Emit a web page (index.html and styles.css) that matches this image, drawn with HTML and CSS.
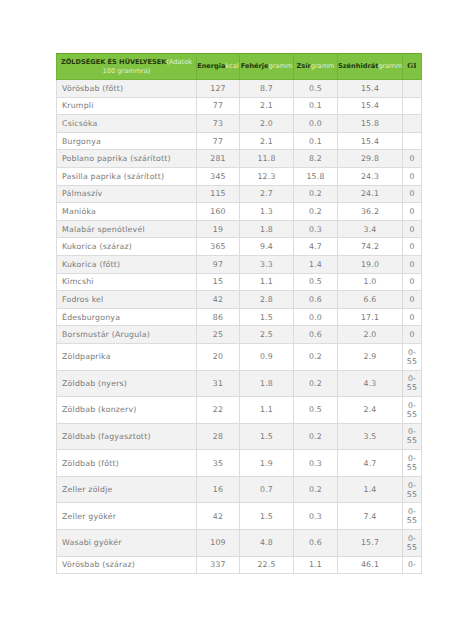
FILE: index.html
```html
<!DOCTYPE html>
<html lang="hu">
<head>
    <meta charset="UTF-8">
    <title>Zöldségek és hüvelyesek</title>
    <link rel="stylesheet" href="styles.css">
</head>
<body>
    <div class="page">
        <table class="nutri">
            <thead>
                <tr>
                    <th class="name-col"><b>ZÖLDSÉGEK ÉS HÜVELYESEK</b><span class="unit">(Adatok<br>100 grammra)</span></th>
                    <th class="c-en"><b>Energia</b><span class="unit">kcal</span></th>
                    <th class="c-fe"><b>Fehérje</b><span class="unit">gramm</span></th>
                    <th class="c-zs"><b>Zsír</b><span class="unit">gramm</span></th>
                    <th class="c-sz"><b>Szénhidrát</b><span class="unit">gramm</span></th>
                    <th class="c-gi"><b class="gi">GI</b></th>
                </tr>
            </thead>
            <tbody>
                <tr><td>Vörösbab (főtt)</td><td>127</td><td>8.7</td><td>0.5</td><td>15.4</td><td></td></tr>
                <tr><td>Krumpli</td><td>77</td><td>2.1</td><td>0.1</td><td>15.4</td><td></td></tr>
                <tr><td>Csicsóka</td><td>73</td><td>2.0</td><td>0.0</td><td>15.8</td><td></td></tr>
                <tr><td>Burgonya</td><td>77</td><td>2.1</td><td>0.1</td><td>15.4</td><td></td></tr>
                <tr><td>Poblano paprika (szárított)</td><td>281</td><td>11.8</td><td>8.2</td><td>29.8</td><td>0</td></tr>
                <tr><td>Pasilla paprika (szárított)</td><td>345</td><td>12.3</td><td>15.8</td><td>24.3</td><td>0</td></tr>
                <tr><td>Pálmaszív</td><td>115</td><td>2.7</td><td>0.2</td><td>24.1</td><td>0</td></tr>
                <tr><td>Manióka</td><td>160</td><td>1.3</td><td>0.2</td><td>36.2</td><td>0</td></tr>
                <tr><td>Malabár spenótlevél</td><td>19</td><td>1.8</td><td>0.3</td><td>3.4</td><td>0</td></tr>
                <tr><td>Kukorica (száraz)</td><td>365</td><td>9.4</td><td>4.7</td><td>74.2</td><td>0</td></tr>
                <tr><td>Kukorica (főtt)</td><td>97</td><td>3.3</td><td>1.4</td><td>19.0</td><td>0</td></tr>
                <tr><td>Kimcshi</td><td>15</td><td>1.1</td><td>0.5</td><td>1.0</td><td>0</td></tr>
                <tr><td>Fodros kel</td><td>42</td><td>2.8</td><td>0.6</td><td>6.6</td><td>0</td></tr>
                <tr><td>Édesburgonya</td><td>86</td><td>1.5</td><td>0.0</td><td>17.1</td><td>0</td></tr>
                <tr><td>Borsmustár (Arugula)</td><td>25</td><td>2.5</td><td>0.6</td><td>2.0</td><td>0</td></tr>
                <tr><td>Zöldpaprika</td><td>20</td><td>0.9</td><td>0.2</td><td>2.9</td><td>0-55</td></tr>
                <tr><td>Zöldbab (nyers)</td><td>31</td><td>1.8</td><td>0.2</td><td>4.3</td><td>0-55</td></tr>
                <tr><td>Zöldbab (konzerv)</td><td>22</td><td>1.1</td><td>0.5</td><td>2.4</td><td>0-55</td></tr>
                <tr><td>Zöldbab (fagyasztott)</td><td>28</td><td>1.5</td><td>0.2</td><td>3.5</td><td>0-55</td></tr>
                <tr><td>Zöldbab (főtt)</td><td>35</td><td>1.9</td><td>0.3</td><td>4.7</td><td>0-55</td></tr>
                <tr><td>Zeller zöldje</td><td>16</td><td>0.7</td><td>0.2</td><td>1.4</td><td>0-55</td></tr>
                <tr><td>Zeller gyökér</td><td>42</td><td>1.5</td><td>0.3</td><td>7.4</td><td>0-55</td></tr>
                <tr><td>Wasabi gyökér</td><td>109</td><td>4.8</td><td>0.6</td><td>15.7</td><td>0-55</td></tr>
                <tr><td>Vörösbab (száraz)</td><td>337</td><td>22.5</td><td>1.1</td><td>46.1</td><td>0-</td></tr>
            </tbody>
        </table>
    </div>
</body>
</html>
```

FILE: styles.css
```css
* {
    margin: 0;
    padding: 0;
    box-sizing: border-box;
}

body {
    background: #fff;
    font-family: 'DejaVu Sans', Verdana, sans-serif;
    color: #7a7a7a;
}

.page {
    padding: 53px 0 0 56px;
}

.nutri {
    width: 365px;
    border-collapse: collapse;
    table-layout: fixed;
    font-size: 7.8px;
    letter-spacing: 0.2px;
}

.nutri th {
    background: #80c242;
    border: 1px solid #70b235;
    border-top: 1px solid #64a52c;
    height: 26px;
    padding: 0;
    font-size: 6.6px;
    line-height: 8.5px;
    letter-spacing: 0;
    text-align: center;
    vertical-align: middle;
    font-weight: normal;
    white-space: nowrap;
}

.nutri th b {
    color: #24390f;
    font-weight: bold;
}

.nutri th .gi {
    font-family: 'DejaVu Serif', serif;
    font-size: 7px;
}

.nutri th .unit {
    color: #e2f0d2;
}

.name-col { width: 140px; }
.c-en { width: 43px; }
.c-fe { width: 54px; }
.c-zs { width: 44px; }
.c-sz { width: 65px; }
.c-gi { width: 19px; }

.nutri td {
    border: 1px solid #dcdcdc;
    padding: 3.8px 1px;
    line-height: 9px;
    text-align: center;
    vertical-align: middle;
}

.nutri td:first-child {
    text-align: left;
    padding-left: 5px;
}

.nutri td:last-child {
    padding: 3.8px 2px;
}

.nutri tbody tr:nth-child(odd) {
    background: #f2f2f2;
}
```
